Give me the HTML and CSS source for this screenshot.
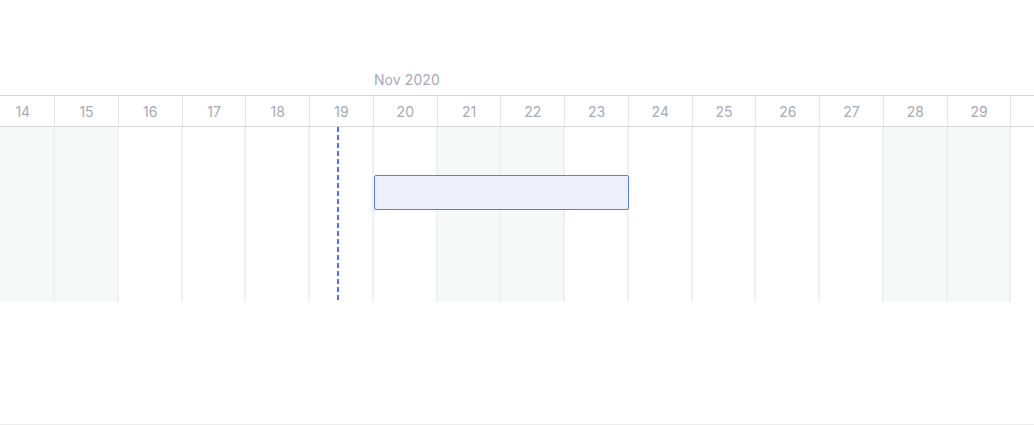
FILE: index.html
```html
<!DOCTYPE html>
<html>
<head>
<meta charset="utf-8">
<link rel="stylesheet" href="styles.css">
</head>
<body>
<div class="page">
  <div class="gantt">
    <div class="month-row">
      <div class="month-spacer"></div>
      <div class="month-label">Nov 2020</div>
    </div>
    <div class="day-row">
      <div class="day">14</div>
      <div class="day">15</div>
      <div class="day">16</div>
      <div class="day">17</div>
      <div class="day">18</div>
      <div class="day">19</div>
      <div class="day">20</div>
      <div class="day">21</div>
      <div class="day">22</div>
      <div class="day">23</div>
      <div class="day">24</div>
      <div class="day">25</div>
      <div class="day">26</div>
      <div class="day">27</div>
      <div class="day">28</div>
      <div class="day">29</div>
      <div class="day"></div>
    </div>
    <div class="body">
      <div class="col weekend"></div>
      <div class="col weekend"></div>
      <div class="col"></div>
      <div class="col"></div>
      <div class="col"></div>
      <div class="col"><div class="today"></div></div>
      <div class="col"><div class="bar"></div></div>
      <div class="col weekend"></div>
      <div class="col weekend"></div>
      <div class="col"></div>
      <div class="col"></div>
      <div class="col"></div>
      <div class="col"></div>
      <div class="col"></div>
      <div class="col weekend"></div>
      <div class="col weekend"></div>
      <div class="col"></div>
    </div>
  </div>
  <div class="footer-line"></div>
</div>
</body>
</html>
```

FILE: styles.css
```css
html, body {
  margin: 0;
  padding: 0;
  background: #ffffff;
  overflow: hidden;
}
.page {
  width: 1034px;
  height: 425px;
  overflow: hidden;
  display: flex;
  flex-direction: column;
  font-family: "Inter", "Lato", sans-serif;
}
.gantt {
  margin-top: 64px;
  margin-left: -8.6px;
  display: flex;
  flex-direction: column;
}
.month-row {
  display: flex;
  height: 31px;
  align-items: center;
}
.month-spacer {
  width: 382.5px;
  flex: none;
}
.month-label {
  font-size: 14px;
  color: #a6aab4;
  letter-spacing: 0.1px;
}
.day-row {
  display: flex;
  border-top: 1px solid #d6d6d6;
  border-bottom: 1px solid #d6d6d6;
  height: 30px;
}
.day {
  flex: none;
  width: 63.75px;
  box-sizing: border-box;
  border-right: 1px solid #e4e4e4;
  display: flex;
  align-items: center;
  justify-content: center;
  font-size: 14px;
  color: #a6aab4;
}
.body {
  display: flex;
  height: 175px;
}
.col {
  flex: none;
  width: 63.75px;
  box-sizing: border-box;
  border-right: 2px solid #f0f0f0;
  position: relative;
}
.col.weekend {
  background: #f7f8f8;
}
.today {
  position: absolute;
  left: 26.5px;
  top: 0;
  bottom: 0;
  width: 2px;
  background: repeating-linear-gradient(to bottom, #4f6fe3 0 5px, transparent 5px 8px);
}
.bar {
  position: absolute;
  left: 0.5px;
  top: 48px;
  width: 255px;
  height: 35px;
  box-sizing: border-box;
  background: #edf0fb;
  border: 1px solid #5b7be6;
  border-radius: 2px;
  z-index: 2;
}
.footer-line {
  margin-top: auto;
  height: 1px;
  background: #ececec;
}
```
